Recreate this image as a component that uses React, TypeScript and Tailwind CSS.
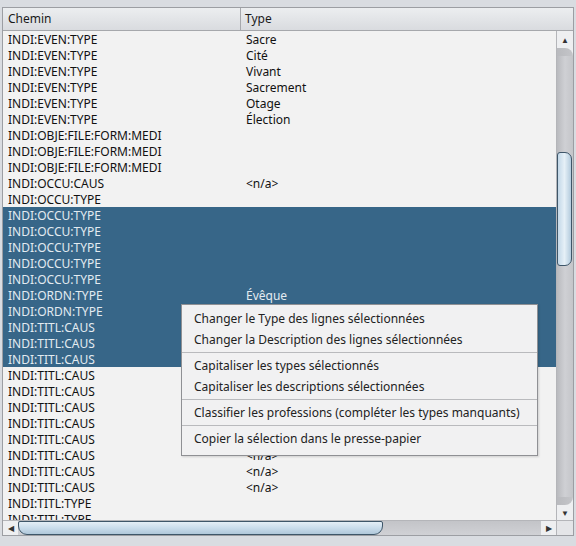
import React from "react";

type Row = { p: string; t?: string; sel?: boolean };

const rows: Row[] = [
  { p: "INDI:EVEN:TYPE", t: "Sacre" },
  { p: "INDI:EVEN:TYPE", t: "Cité" },
  { p: "INDI:EVEN:TYPE", t: "Vivant" },
  { p: "INDI:EVEN:TYPE", t: "Sacrement" },
  { p: "INDI:EVEN:TYPE", t: "Otage" },
  { p: "INDI:EVEN:TYPE", t: "Élection" },
  { p: "INDI:OBJE:FILE:FORM:MEDI" },
  { p: "INDI:OBJE:FILE:FORM:MEDI" },
  { p: "INDI:OBJE:FILE:FORM:MEDI" },
  { p: "INDI:OCCU:CAUS", t: "<n/a>" },
  { p: "INDI:OCCU:TYPE" },
  { p: "INDI:OCCU:TYPE", sel: true },
  { p: "INDI:OCCU:TYPE", sel: true },
  { p: "INDI:OCCU:TYPE", sel: true },
  { p: "INDI:OCCU:TYPE", sel: true },
  { p: "INDI:OCCU:TYPE", sel: true },
  { p: "INDI:ORDN:TYPE", t: "Évêque", sel: true },
  { p: "INDI:ORDN:TYPE", sel: true },
  { p: "INDI:TITL:CAUS", t: "<n/a>", sel: true },
  { p: "INDI:TITL:CAUS", t: "<n/a>", sel: true },
  { p: "INDI:TITL:CAUS", t: "<n/a>", sel: true },
  { p: "INDI:TITL:CAUS", t: "<n/a>" },
  { p: "INDI:TITL:CAUS", t: "<n/a>" },
  { p: "INDI:TITL:CAUS", t: "<n/a>" },
  { p: "INDI:TITL:CAUS", t: "<n/a>" },
  { p: "INDI:TITL:CAUS", t: "<n/a>" },
  { p: "INDI:TITL:CAUS", t: "<n/a>" },
  { p: "INDI:TITL:CAUS", t: "<n/a>" },
  { p: "INDI:TITL:CAUS", t: "<n/a>" },
  { p: "INDI:TITL:TYPE" },
  { p: "INDI:TITL:TYPE" },
];

function MenuItem({ label }: { label: string }) {
  return (
    <div className="h-[21px] flex items-center pl-[12px] pr-[12px] whitespace-nowrap text-[12px] leading-[21px] text-[#222222]">
      {label}
    </div>
  );
}

function Sep() {
  return (
    <div className="h-[5px] flex flex-col justify-center">
      <div className="h-px bg-[#b9babd]" />
    </div>
  );
}

export default function App() {
  return (
    <div
      className="w-[576px] h-[546px] bg-[#d9dce1] pt-[7px] pl-[2px] overflow-hidden"
      style={{ fontFamily: '"Noto Sans", "Open Sans", sans-serif' }}
    >
      <div className="relative w-[572px] h-[529px] border border-[#9c9ea3] bg-[#f2f2f2] flex flex-col">
        {/* Header */}
        <div className="h-[23px] flex border-b border-[#a6a8ac] bg-gradient-to-b from-[#eceef0] to-[#d9dbdf] text-[12px] text-[#1a1a1a]">
          <div className="w-[238px] border-r border-[#a6a8ac] flex items-center pl-[5px]">Chemin</div>
          <div className="flex-1 flex items-center pl-[4px]">Type</div>
        </div>

        {/* Body */}
        <div className="flex h-[489px]">
          <div className="w-[553px] overflow-hidden text-[12px]">
            {rows.map((r, i) => (
              <div
                key={i}
                className={
                  "h-[16px] flex leading-[18px] " +
                  (r.sel ? "bg-[#376688] text-[#e3ebf1]" : "text-[#111111]")
                }
              >
                <div className="w-[238px] pl-[5px] whitespace-nowrap">{r.p}</div>
                <div className="pl-[5px] whitespace-nowrap">{r.t ?? ""}</div>
              </div>
            ))}
          </div>

          {/* Vertical scrollbar */}
          <div className="w-[17px] flex flex-col bg-[#d3d4d8] border-l border-[#b4b5b9]">
            <div className="h-[17px] flex items-center justify-center bg-[#eeeff1] text-[8px] text-[#333]">▲</div>
            <div className="relative flex-1 bg-gradient-to-r from-[#b9babe] via-[#cfd0d4] to-[#c4c5c9]">
              <div className="absolute left-0 right-0 top-0 h-[8px] bg-[#eeeff1]" />
              <div className="absolute left-0 right-0 top-0 h-[8px] rounded-tr-[10px] bg-gradient-to-r from-[#b9babe] to-[#c4c5c9]" />
              <div className="absolute left-0 w-[15px] top-[104px] h-[114px] rounded-r-[7px] rounded-l-[3px] border border-[#3e5669] bg-gradient-to-r from-[#c3d8e8] via-[#e6f0f7] to-[#b3cbdd]" />
              <div className="absolute left-0 right-0 bottom-0 h-[8px] bg-[#eeeff1]" />
              <div className="absolute left-0 right-0 bottom-0 h-[8px] rounded-br-[10px] bg-gradient-to-r from-[#b9babe] to-[#c4c5c9]" />
            </div>
            <div className="h-[15px] flex items-center justify-center bg-[#eeeff1] text-[8px] text-[#333]">▼</div>
          </div>
        </div>

        {/* Horizontal scrollbar */}
        <div className="flex h-[15px] border-t border-[#b4b5b9]">
          <div className="w-[553px] flex bg-[#d3d4d8]">
            <div className="w-[15px] flex items-center justify-center bg-[#eeeff1] text-[8px] text-[#333]">◀</div>
            <div className="relative flex-1 bg-gradient-to-b from-[#c3c4c8] to-[#d0d1d5]">
              <div className="absolute left-0 top-0 w-[365px] h-[14px] rounded-b-[9px] rounded-t-[2px] border border-[#3e5669] bg-gradient-to-b from-[#e4eef6] via-[#c9dceb] to-[#b0c8da]" />
            </div>
            <div className="w-[15px] flex items-center justify-center bg-[#eeeff1] text-[8px] text-[#333]">▶</div>
          </div>
          <div className="w-[17px] bg-[#e4e5e8] border-l border-[#b4b5b9]" />
        </div>

        {/* Context menu */}
        <div className="absolute left-[178px] top-[296px] w-[357px] border border-[#8f9094] bg-[#f1f1f2] pt-[3px] pb-[6px] shadow-[1px_1px_2px_rgba(0,0,0,0.15)]">
          <MenuItem label="Changer le Type des lignes sélectionnées" />
          <MenuItem label="Changer la Description des lignes sélectionnées" />
          <Sep />
          <MenuItem label="Capitaliser les types sélectionnés" />
          <MenuItem label="Capitaliser les descriptions sélectionnées" />
          <Sep />
          <MenuItem label="Classifier les professions (compléter les types manquants)" />
          <Sep />
          <MenuItem label="Copier la sélection dans le presse-papier" />
        </div>
      </div>
    </div>
  );
}
